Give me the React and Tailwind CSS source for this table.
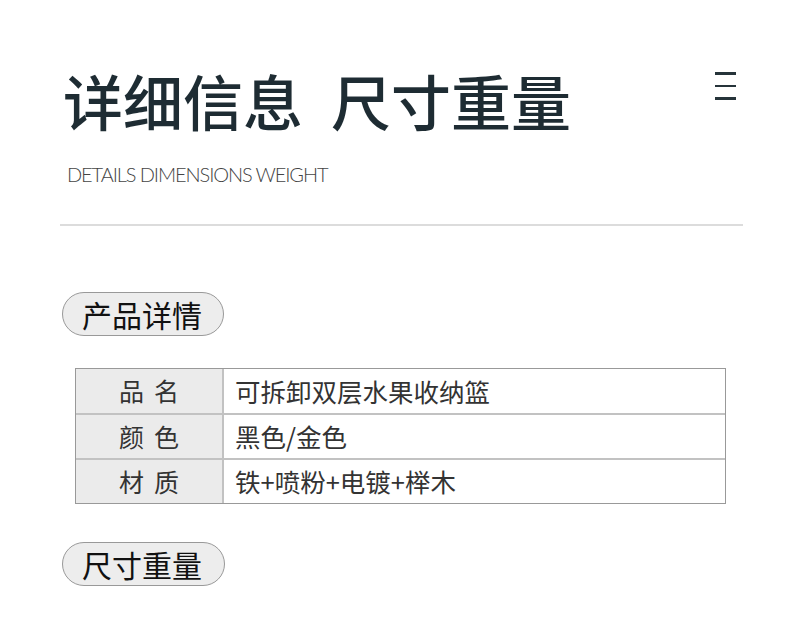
export default function App() {
  const rows = [
    { label: ["品", "名"], value: "可拆卸双层水果收纳篮" },
    { label: ["颜", "色"], value: "黑色/金色" },
    { label: ["材", "质"], value: "铁+喷粉+电镀+榉木" },
  ];

  return (
    <div className="w-[800px] h-[617px] bg-white overflow-hidden font-['Noto_Sans_CJK_SC',sans-serif]">
      <div className="flex justify-between pl-[63px] pr-[64px] pt-[68px]">
        <h1 className="text-[60px] leading-[64px] font-medium text-[#1e2c33] flex">
          <span>详细信息</span>
          <span className="ml-[28px]">尺寸重量</span>
        </h1>
        <div className="flex flex-col gap-[10px] pt-[4px]">
          <span className="block w-[21px] h-[2.5px] bg-[#26343a]" />
          <span className="block w-[21px] h-[2.5px] bg-[#26343a]" />
          <span className="block w-[21px] h-[2.5px] bg-[#26343a]" />
        </div>
      </div>

      <p className="pl-[67px] mt-[30px] font-['Lato',sans-serif] font-light text-[20px] leading-[24px] tracking-[-1.1px] text-[#444]">
        DETAILS DIMENSIONS WEIGHT
      </p>

      <div className="mx-[60px] mt-[38px] w-[683px] h-[2px] bg-[#dcdcdc]" />

      <div className="pl-[62px] mt-[66px]">
        <div className="w-[162px] h-[44px] rounded-full border border-[#999] bg-[#ededed] flex items-center pl-[19px] text-[30px] text-[#111]">
          产品详情
        </div>
      </div>

      <div className="ml-[75px] mt-[32px] w-[651px] border border-[#999]">
        {rows.map((r, i) => (
          <div
            key={i}
            className={
              i === 0
                ? "flex h-[44px]"
                : "flex h-[45px] border-t-2 border-[#c2c2c2]"
            }
          >
            <div className="w-[148px] bg-[#ebebeb] border-r-2 border-[#c2c2c2] flex items-center justify-center gap-[10px] text-[25px] text-[#333]">
              <span>{r.label[0]}</span>
              <span>{r.label[1]}</span>
            </div>
            <div className="flex-1 flex items-center pl-[11px] text-[25.5px] text-[#333]">
              {r.value}
            </div>
          </div>
        ))}
      </div>

      <div className="pl-[62px] mt-[38px]">
        <div className="w-[163px] h-[44px] rounded-full border border-[#999] bg-[#ededed] flex items-center pl-[19px] text-[30px] text-[#111]">
          尺寸重量
        </div>
      </div>
    </div>
  );
}
